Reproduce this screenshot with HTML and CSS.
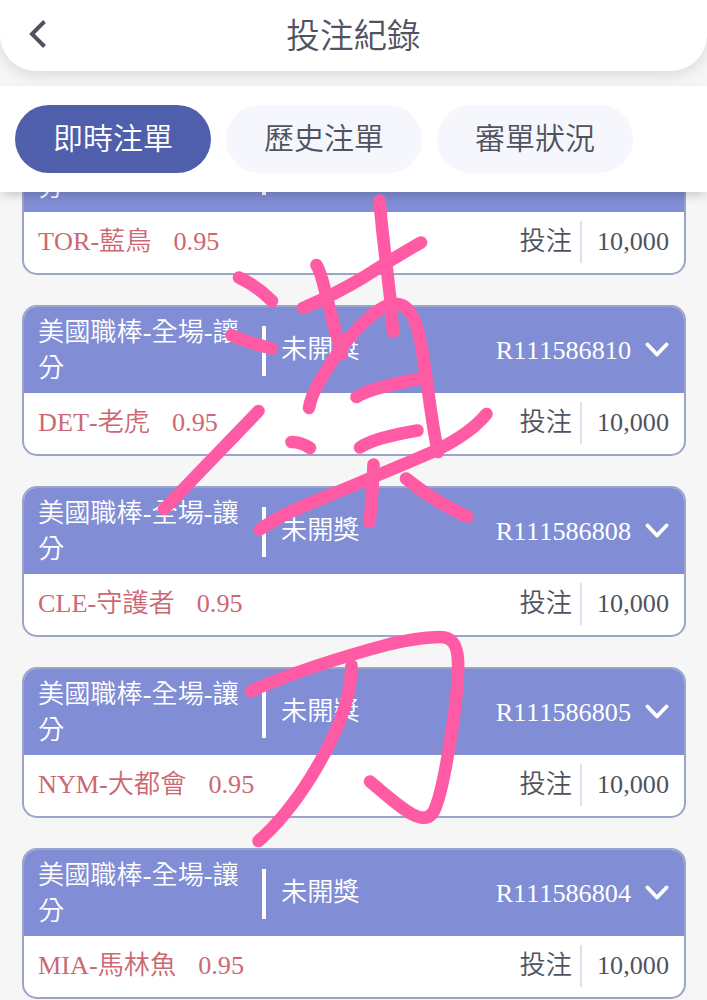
FILE: index.html
```html
<!DOCTYPE html>
<html lang="zh-Hant">
<head>
    <meta charset="UTF-8">
    <title>投注紀錄</title>
    <link rel="stylesheet" href="styles.css">
</head>
<body>
<header class="header">
    <svg class="back" viewBox="0 0 18 28"><path d="M15.5 1.5L3 14l12.500 12.500"/></svg>
    <h1>投注紀錄</h1>
</header>

<nav class="tabs">
    <a class="tab active">即時注單</a>
    <a class="tab">歷史注單</a>
    <a class="tab">審單狀況</a>
</nav>

<main class="list">
    <div class="card">
        <div class="card-head">
            <div class="game">美國職棒-全場-讓分</div>
            <div class="status">未開獎</div>
            <div class="order">R111586812</div>
            <svg class="arrow" viewBox="0 0 24 16"><path d="M2.500 2.500L12 12.500l9.500-10"/></svg>
        </div>
        <div class="card-body">
            <span class="team">TOR-藍鳥</span>
            <span class="odds">0.95</span>
            <span class="label">投注</span>
            <span class="amount">10,000</span>
        </div>
    </div>
    <div class="card">
        <div class="card-head">
            <div class="game">美國職棒-全場-讓分</div>
            <div class="status">未開獎</div>
            <div class="order">R111586810</div>
            <svg class="arrow" viewBox="0 0 24 16"><path d="M2.500 2.500L12 12.500l9.500-10"/></svg>
        </div>
        <div class="card-body">
            <span class="team">DET-老虎</span>
            <span class="odds">0.95</span>
            <span class="label">投注</span>
            <span class="amount">10,000</span>
        </div>
    </div>
    <div class="card">
        <div class="card-head">
            <div class="game">美國職棒-全場-讓分</div>
            <div class="status">未開獎</div>
            <div class="order">R111586808</div>
            <svg class="arrow" viewBox="0 0 24 16"><path d="M2.500 2.500L12 12.500l9.500-10"/></svg>
        </div>
        <div class="card-body">
            <span class="team">CLE-守護者</span>
            <span class="odds">0.95</span>
            <span class="label">投注</span>
            <span class="amount">10,000</span>
        </div>
    </div>
    <div class="card">
        <div class="card-head">
            <div class="game">美國職棒-全場-讓分</div>
            <div class="status">未開獎</div>
            <div class="order">R111586805</div>
            <svg class="arrow" viewBox="0 0 24 16"><path d="M2.500 2.500L12 12.500l9.500-10"/></svg>
        </div>
        <div class="card-body">
            <span class="team">NYM-大都會</span>
            <span class="odds">0.95</span>
            <span class="label">投注</span>
            <span class="amount">10,000</span>
        </div>
    </div>
    <div class="card">
        <div class="card-head">
            <div class="game">美國職棒-全場-讓分</div>
            <div class="status">未開獎</div>
            <div class="order">R111586804</div>
            <svg class="arrow" viewBox="0 0 24 16"><path d="M2.500 2.500L12 12.500l9.500-10"/></svg>
        </div>
        <div class="card-body">
            <span class="team">MIA-馬林魚</span>
            <span class="odds">0.95</span>
            <span class="label">投注</span>
            <span class="amount">10,000</span>
        </div>
    </div>
</main>

<!-- 手寫筆跡 -->
<svg class="ink" viewBox="0 0 707 1000">
    <path d="M239 277.500Q257 286 272 301"/>
    <path d="M231.500 335Q242 341 272 348.500"/>
    <path d="M258.500 411L164 509"/>
    <path d="M316.500 265C322 274 324 288 328 302Q336 334 342 354"/>
    <path d="M303 308Q334 295 364 277Q392 259 421 242.500"/>
    <path d="M379.500 200.500Q382 230 387 270Q391 300 393 332"/>
    <path d="M309 408C312 391 322 377 337 354C353 331 376 307 393 304C408 302 416 319 420 339C427 373 430 416 438 452"/>
    <path d="M356.500 397Q367 389 422 378"/>
    <path d="M291.500 442Q301 442 310 448"/>
    <path d="M360 447.500Q373 438 417.500 430.500"/>
    <path d="M260 529.500C285 511 320 500 366 480Q405 464 437 450Q471 433 486.500 414"/>
    <path d="M373.500 464.500Q373 490 369.500 522"/>
    <path d="M406 478.500Q435 502 467 516.500"/>
    <path d="M251 691C298 670 345 656 390 644Q422 637 440 637C452 637 457 644 458 660C459 686 453 725 448 754Q441 796 434 811Q428 821 416 816C405 812 386 795 370 781.500"/>
    <path d="M351.500 665.500C351 704 334 739 311 777Q286 817 258.500 841"/>
</svg>
</body>
</html>
```

FILE: styles.css
```css
*{margin: 0; padding: 0; box-sizing: border-box;}
body{
    position: relative;
    display: flex;
    flex-direction: column;
    height: 1000px;
    overflow: hidden;
    background-color: #f6f6f6;
    color: #50535f;
    font-family: "Liberation Serif", "Noto Sans CJK TC", serif;
    font-weight: 350;
    font-kerning: none;
}
svg{
    fill: none;
    stroke-linecap: round;
    stroke-linejoin: round;
}

/*頂部標題*/
.header{
    display: grid;
    grid-template-columns: 60px 1fr 60px;
    align-items: center;
    height: 71px;
    padding: 3px 0 0;
    background-color: #fff;
    border-radius: 0 0 36px 36px;
    box-shadow: 0 3px 16px rgba(0,0,0,.13);
}
.back{
    width: 18px;
    height: 28px;
    margin: -7px 0 0 29px;
    stroke: #50535f;
    stroke-width: 4;
    stroke-linecap: butt;
    stroke-linejoin: miter;
}
.header h1{
    font-size: 33.6px;
    font-weight: 350;
    line-height: 48px;
    text-align: center;
}

.tabs{
    position: relative;
    z-index: 1;
    display: flex;
    flex: none;
    gap: 15px;
    height: 106px;
    margin-top: 15px;
    padding: 19px 15px;
    background-color: #fff;
    box-shadow: 0 5px 10px -2px rgba(0,0,0,.2);
}
.tab{
    width: 196px;
    height: 68px;
    border-radius: 34px;
    background-color: #f6f7fc;
    font-size: 30px;
    line-height: 67px;
    text-align: center;
}
.tab.active{
    background-color: #505fac;
    color: #fff;
}

/*注單列表*/
.list{
    flex: 1;
    overflow: hidden;
    padding: 0 21px 0 22px;
}
.card{
    height: 151px;
    margin-bottom: 30px;
    overflow: hidden;
    border: 2px solid #9ba4c9;
    border-radius: 15px;
    background-color: #fff;
    font-size: 26.2px;
}
.card:first-child{
    margin-top: -68px;
}
.card-head{
    display: flex;
    align-items: center;
    height: 86px;
    padding: 1px 15px 0 14px;
    background-color: #818ed5;
    color: #fff;
}
.game{
    width: 204px;
    line-height: 36px;
}
.status{
    height: 50px;
    margin-left: 20px;
    padding-left: 15px;
    border-left: 4px solid #fff;
    line-height: 48px;
}
.order{
    margin-left: auto;
}
.arrow{
    width: 24px;
    height: 16px;
    margin: -2px 0 0 14px;
    stroke: #fff;
    stroke-width: 3.8;
}
.card-body{
    display: flex;
    align-items: center;
    height: 60px;
    padding: 0 15px 0 14px;
    line-height: 42px;
}
.team,
.odds{
    color: #cc6873;
}
.odds{
    margin-left: 22px;
}
.label{
    margin-left: auto;
}
.amount{
    height: 42px;
    margin-left: 8px;
    padding-left: 15px;
    border-left: 2px solid #dddef0;
}

/*蓋在頁面上方*/
.ink{
    position: absolute;
    z-index: 2;
    top: 0;
    left: 0;
    width: 707px;
    height: 1000px;
    stroke: #ff5ba5;
    stroke-width: 12.6;
}
```
